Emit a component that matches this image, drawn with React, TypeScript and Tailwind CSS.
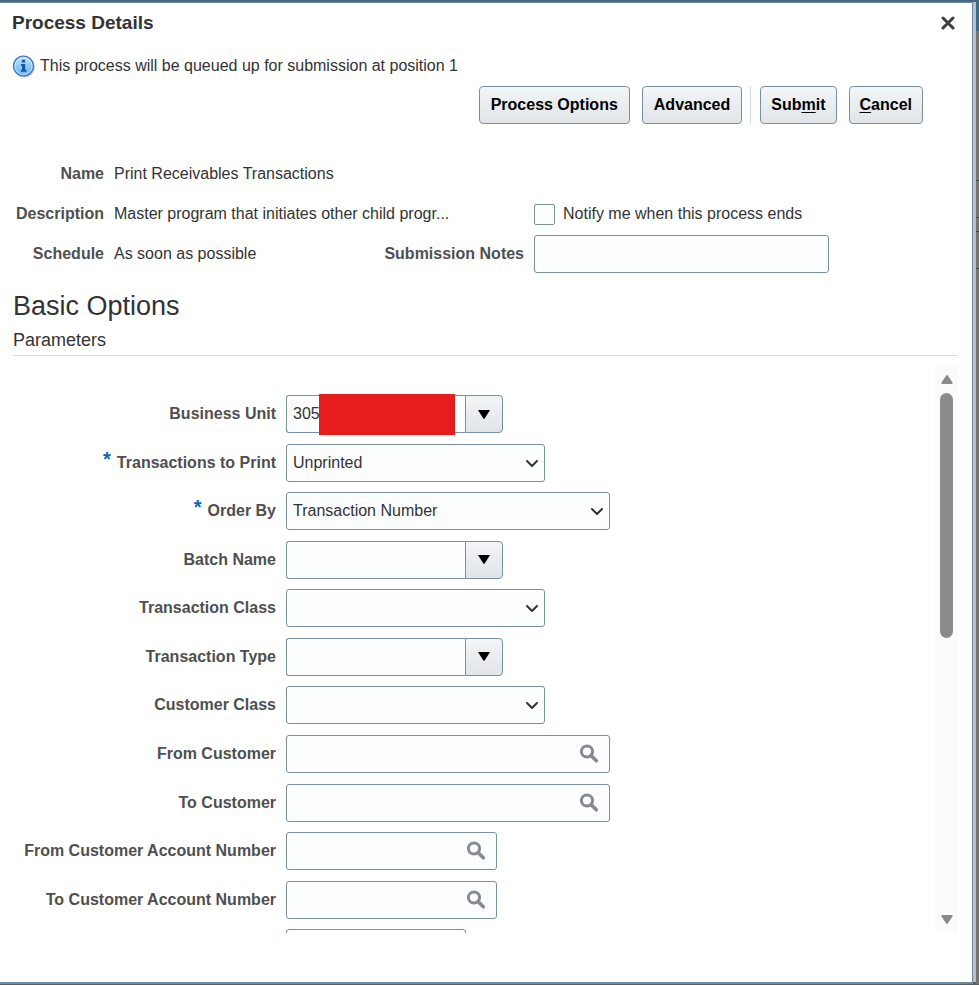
import { useId } from "react";

type FieldKind = "combo" | "select" | "search";

type Field = {
  label: string;
  kind: FieldKind;
  width: string;
  value?: string;
  required?: boolean;
  redacted?: boolean;
};

const fields: Field[] = [
  { label: "Business Unit", kind: "combo", width: "w-[217px]", value: "305", redacted: true },
  { label: "Transactions to Print", kind: "select", width: "w-[259px]", value: "Unprinted", required: true },
  { label: "Order By", kind: "select", width: "w-[324px]", value: "Transaction Number", required: true },
  { label: "Batch Name", kind: "combo", width: "w-[217px]" },
  { label: "Transaction Class", kind: "select", width: "w-[259px]" },
  { label: "Transaction Type", kind: "combo", width: "w-[217px]" },
  { label: "Customer Class", kind: "select", width: "w-[259px]" },
  { label: "From Customer", kind: "search", width: "w-[324px]" },
  { label: "To Customer", kind: "search", width: "w-[324px]" },
  { label: "From Customer Account Number", kind: "search", width: "w-[211px]" },
  { label: "To Customer Account Number", kind: "search", width: "w-[211px]" },
];

const inputStyle = "h-[38px] rounded-[3px] border border-[#7b929e] bg-[#fcfdfe] px-1.5 text-[#333] outline-none";
const buttonStyle =
  "h-[38px] rounded-[4px] border border-[#7890a3] bg-linear-to-b from-[#f3f5f6] to-[#e1e5e8] font-bold text-black";

function InfoIcon() {
  return (
    <svg className="size-6" viewBox="0 0 24 24" aria-hidden="true">
      <defs>
        <linearGradient id="info-fill" x1="0" y1="0" x2="0" y2="1">
          <stop offset="0" stopColor="#cfe6fb" />
          <stop offset="0.5" stopColor="#8fcaf8" />
          <stop offset="1" stopColor="#62b8fa" />
        </linearGradient>
      </defs>
      <circle cx="12.4" cy="13" r="10.4" fill="#8f96a6" opacity="0.6" />
      <circle cx="11.5" cy="12" r="9.9" fill="url(#info-fill)" stroke="#3a76c4" strokeWidth="1.4" />
      <circle cx="11.5" cy="12" r="8.7" fill="none" stroke="#d8ecfc" strokeWidth="0.8" />
      <path d="M9.800 5.800h3.400v2.800H9.800zM9 10h4.200v6h1.300v1.800H8.800V16h1.200v-4.300H9z" fill="#1a55ad" />
    </svg>
  );
}

function SearchIcon() {
  return (
    <svg className="size-5" viewBox="0 0 20 20" fill="none" stroke="#858b8f" aria-hidden="true">
      <circle cx="8" cy="7.500" r="5.600" strokeWidth="3" />
      <path d="m12 11.500 5.300 5.300" strokeWidth="3.600" strokeLinecap="round" />
    </svg>
  );
}

function Control({ field, id }: { field: Field; id: string }) {
  if (field.kind === "select") {
    return (
      <div className={`relative ${field.width}`}>
        <select id={id} className={`${inputStyle} w-full appearance-none`}>
          <option>{field.value ?? ""}</option>
        </select>
        <svg className="pointer-events-none absolute top-3 right-1.5 size-3.5" viewBox="0 0 14 14" fill="none" aria-hidden="true">
          <path d="m2 5 5 5 5-5" stroke="#333" strokeWidth="2" strokeLinecap="round" strokeLinejoin="round" />
        </svg>
      </div>
    );
  }

  if (field.kind === "combo") {
    return (
      <div className={`relative flex ${field.width}`}>
        <input id={id} type="text" defaultValue={field.value} className={`${inputStyle} min-w-0 flex-1 rounded-r-none border-r-0`} />
        <button
          type="button"
          aria-label={`${field.label} list`}
          className="grid h-[38px] w-[38px] place-items-center rounded-r-[4px] border border-[#7890a3] bg-linear-to-b from-[#f3f5f6] to-[#e1e5e8]"
        >
          <svg className="h-[9px] w-3" viewBox="0 0 12 9" aria-hidden="true">
            <path d="M0 0h12L6.8 8.2a1 1 0 0 1-1.6 0Z" fill="#000" />
          </svg>
        </button>
        {field.redacted && <div className="absolute -top-px left-[33px] h-[41px] w-[136px] bg-[#e71d1d]" />}
      </div>
    );
  }

  return (
    <div className={`relative ${field.width}`}>
      <input id={id} type="text" className={`${inputStyle} w-full pr-9`} />
      <button type="button" aria-label={`Search ${field.label}`} className="absolute top-[9px] right-[11px]">
        <SearchIcon />
      </button>
    </div>
  );
}

function FieldRow({ field }: { field: Field }) {
  const id = useId();
  return (
    <div className="grid grid-cols-[263px_1fr] items-start gap-x-2.5">
      <label htmlFor={id} className="pt-[7px] text-right font-bold text-[#4f4f4f]">
        {field.required && <span className="mr-1.5 align-[2px] text-xl leading-4 text-[#0a67b3]">*</span>}
        {field.label}
      </label>
      <Control field={field} id={id} />
    </div>
  );
}

function ScrollArrow({ className }: { className: string }) {
  return (
    <svg className={`h-[9px] w-3 ${className}`} viewBox="0 0 12 9">
      <path d="M5 .8a1.2 1.2 0 0 1 2 0l4.5 6.7Q12 9 10.8 9H1.2Q0 9 .5 7.5Z" fill="#8b8b8b" />
    </svg>
  );
}

function Scrollbar() {
  return (
    <div className="flex w-[23px] flex-col items-center bg-[#fbfbfb] py-[9px]" aria-hidden="true">
      <ScrollArrow className="" />
      <div className="mt-[9px] h-[245px] w-[13px] rounded-full bg-[#8b8b8b]" />
      <ScrollArrow className="mt-auto rotate-180" />
    </div>
  );
}

export default function App() {
  return (
    <div className="flex min-h-screen flex-col bg-[#5c6064] font-['Liberation_Sans',Arial,sans-serif] text-base leading-6 text-[#333]">
      <div className="h-0.5 bg-[#48687e]" />
      <div className="flex flex-1">
        <main className="flex min-w-0 flex-1 flex-col border-t border-r border-b-2 border-[#6b8ba6] bg-white pr-3.5 pb-12 pl-3">
          <header className="flex items-center justify-between pt-2">
            <h1 className="text-[19px] leading-6 font-bold">Process Details</h1>
            <button type="button" aria-label="Close" className="mr-[3px]">
              <svg className="size-3.5" viewBox="0 0 14 14" aria-hidden="true">
                <path d="m2 2 10 10M12 2 2 12" stroke="#3c3c3c" strokeWidth="3" strokeLinecap="round" />
              </svg>
            </button>
          </header>

          <p className="mt-[19px] flex items-center gap-1">
            <InfoIcon />
            This process will be queued up for submission at position 1
          </p>

          <div className="mt-2 mr-[35px] flex justify-end gap-3">
            <button type="button" className={`${buttonStyle} px-[11px]`}>Process Options</button>
            <button type="button" className={`${buttonStyle} px-[11px]`}>Advanced</button>
            <div className="-mr-[3px] -ml-1 w-px bg-[#d3dde5]" />
            <button type="button" className={`${buttonStyle} px-2.5`}>
              Sub<span className="underline underline-offset-2">m</span>it
            </button>
            <button type="button" className={`${buttonStyle} px-2.5`}>
              <span className="underline underline-offset-2">C</span>ancel
            </button>
          </div>

          <section className="mt-[30px] grid grid-cols-[92px_252px_148px_295px] auto-rows-[40px] items-center gap-x-2.5">
            <span className="text-right font-bold text-[#4f4f4f]">Name</span>
            <span className="col-span-3">Print Receivables Transactions</span>
            <span className="text-right font-bold text-[#4f4f4f]">Description</span>
            <span className="col-span-2">Master program that initiates other child progr...</span>
            <label className="flex items-center gap-2">
              <input type="checkbox" className="size-[21px] appearance-none rounded-[2px] border border-[#7b929e] bg-white" />
              Notify me when this process ends
            </label>
            <span className="text-right font-bold text-[#4f4f4f]">Schedule</span>
            <span>As soon as possible</span>
            <label htmlFor="notes" className="text-right font-bold text-[#4f4f4f]">Submission Notes</label>
            <input id="notes" type="text" className={inputStyle} />
          </section>

          <div className="flex flex-1 flex-col pl-px">
            <h2 className="mt-4 text-[27px] leading-8">Basic Options</h2>
            <h3 className="mt-1.5 border-b border-[#d5dde4] pb-[3px] text-lg leading-6">Parameters</h3>

            <div className="mt-2.5 flex h-[567px] overflow-hidden">
              <div className="mt-[29px] grid h-[583px] flex-1 shrink-0 grid-rows-12">
                {fields.map((field) => (
                  <FieldRow key={field.label} field={field} />
                ))}
                <div className="grid grid-cols-[263px_180px] gap-x-2.5">
                  <input type="text" aria-label="Transaction Number" className={`${inputStyle} col-start-2`} />
                </div>
              </div>
              <Scrollbar />
            </div>
          </div>
        </main>

        <div className="mb-0.5 w-[3px] bg-[#c0c0c0]" />
        <div className="flex w-[3px] flex-col">
          <div className="h-[29px] bg-[#3f6a84]" />
          <div className="h-[149px] bg-[#747474]" />
          <div className="h-[37px] border-t border-[#3c4848] bg-[#747474]" />
          <div className="h-3.5 border-t border-[#3c4848] bg-[#747474]" />
          <div className="h-[37px] border-t border-[#3c4848] bg-[#747474]" />
          <div className="flex-1 border-t border-[#3c4848] bg-[#747474]" />
        </div>
      </div>
      <div className="h-px bg-[#5c6064]" />
    </div>
  );
}
